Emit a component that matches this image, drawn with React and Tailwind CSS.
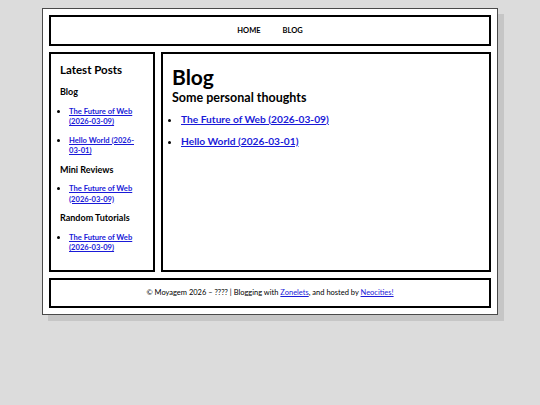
const sidebarGroups = [
  {
    title: 'Blog',
    posts: ['The Future of Web (2026-03-09)', 'Hello World (2026-03-01)'],
  },
  {
    title: 'Mini Reviews',
    posts: ['The Future of Web (2026-03-09)'],
  },
  {
    title: 'Random Tutorials',
    posts: ['The Future of Web (2026-03-09)'],
  },
]

const posts = ['The Future of Web (2026-03-09)', 'Hello World (2026-03-01)']

const linkClass = 'text-[#1a1ad8] underline font-bold'

export default function App() {
  return (
    <div className="min-h-screen bg-[#dcdcdc] pt-[8px] font-['Lato',sans-serif] text-black">
      <div className="mx-auto flex w-[456px] flex-col gap-[6px] border border-[#4a4a4a] bg-white p-[6px] shadow-[6px_6px_0_#c6c6c6]">
        <header className="flex h-[31px] items-center justify-center gap-[22px] border-2 border-black pt-[1px] text-[7.5px] font-bold">
          <a href="#">HOME</a>
          <a href="#">BLOG</a>
        </header>

        <div className="flex h-[220px] gap-[6px]">
          <aside className="w-[106px] shrink-0 border-2 border-black px-[9px] pt-[8px]">
            <h2 className="text-[11.5px] font-bold leading-[16px]">Latest Posts</h2>
            {sidebarGroups.map((group) => (
              <div key={group.title}>
                <h3 className="mt-[8px] text-[9px] font-bold leading-[12px]">{group.title}</h3>
                <ul className="mt-[7.5px] list-disc pl-[9px] text-[7.6px] leading-[10.5px] marker:text-black">
                  {group.posts.map((post, i) => (
                    <li key={i} className="mb-[8px]">
                      <a href="#" className={linkClass}>{post}</a>
                    </li>
                  ))}
                </ul>
              </div>
            ))}
          </aside>

          <main className="flex-1 border-2 border-black px-[9px] pt-[10px]">
            <h1 className="text-[21px] font-bold leading-[26px]">Blog</h1>
            <h2 className="text-[12.5px] font-bold leading-[16px]">Some personal thoughts</h2>
            <ul className="mt-[5px] list-disc pl-[9px] text-[10.2px] leading-[16px]">
              {posts.map((post, i) => (
                <li key={i} className="mb-[6px]">
                  <a href="#" className={linkClass}>{post}</a>
                </li>
              ))}
            </ul>
          </main>
        </div>

        <footer className="flex h-[30px] items-center justify-center border-2 border-black text-[7.5px]">
          <p>
            © Moyagem 2026 – ???? | Blogging with{' '}
            <a href="#" className="text-[#1a1ad8] underline">Zonelets</a>, and hosted by{' '}
            <a href="#" className="text-[#1a1ad8] underline">Neocities!</a>
          </p>
        </footer>
      </div>
    </div>
  )
}
